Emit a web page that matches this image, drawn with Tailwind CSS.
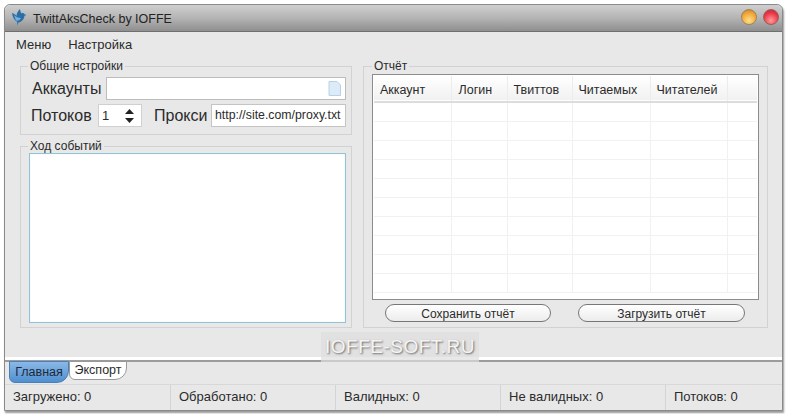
<!DOCTYPE html>
<html lang="en">
  <head>
    <meta charset="UTF-8" />
    <meta name="viewport" content="width=device-width, initial-scale=1.0" />
    <title>TwittAksCheck by IOFFE</title>
    <script src="https://cdn.jsdelivr.net/npm/@tailwindcss/browser@4"></script>
  </head>
  <body class="bg-white font-['Liberation_Sans',sans-serif] text-[#2b2b2b]">
    <div class="w-[788px] h-[414px] pl-1 pt-1 overflow-hidden">
      <!-- window -->
      <div class="relative w-[779px] h-[407px] flex flex-col bg-[#e8e8e8] border border-[#8a8a8a] rounded-t-md shadow-[1px_2px_2px_#999]">
        <div class="h-[27px] flex items-center pl-1.5 pr-[3px] bg-gradient-to-b from-[#cfcfcf] via-[#b4b4b4] to-[#8f8f8f] border-b border-[#6f6f6f] rounded-t-md">
          <svg class="w-[16px] h-[17px] mb-0.5" viewBox="0 0 16 17">
            <path d="M1 4c2 .5 3.500 1.500 4.500 3C5.500 4 7 2 9 0c0 1.500.5 3 1.500 4.500 1-.7 2.500-.5 3 .7l2 .8-2 .8c-.3 3.700-3 6.200-6 6.700L6 16.500l.3-3.500C3.500 11.500 1.500 8 1 4z" fill="#2c6ea8" />
            <path d="M3 6c2 2 4 3 7 3-1 2-3 3-5 2.500z" fill="#74b2de" />
          </svg>
          <span class="ml-[6px] text-[12.500px] text-[#222] mt-0.5">TwittAksCheck by IOFFE</span>
          <span class="ml-auto w-4 h-4 mb-0.5 rounded-full bg-[radial-gradient(circle_at_50%_75%,#ffe08a,#f0a030_65%,#a87a3a)] border border-[#a0855a]"></span>
          <span class="ml-1.5 w-4 h-4 mb-0.5 rounded-full bg-[radial-gradient(circle_at_50%_75%,#ff9a9a,#e83040_65%,#a04040)] border border-[#a05a5a]"></span>
        </div>

        <div class="flex gap-[17px] pl-[11px] pt-[5px] h-[22px] text-[13px] leading-4">
          <span>Меню</span>
          <span>Настройка</span>
        </div>

        <div class="flex gap-[11px] pl-[15px] mt-[6px] h-[268px]">
          <!-- left column -->
          <div class="w-[332px] flex flex-col gap-[5px]">
            <fieldset class="h-[75px] border border-[#d2d2d2] pl-[9px] pr-[5px]">
              <legend class="text-xs leading-[13px] px-0.5 -ml-0.5">Общие нстройки</legend>
              <div class="flex items-center gap-1 mt-1 pl-[2px]">
                <label class="text-[16px] leading-[18px] w-[70px]">Аккаунты</label>
                <div class="w-[240px] h-[23px] bg-white border border-[#bcbcbc] flex items-center justify-end pr-1">
                  <svg class="w-[13px] h-[15px]" viewBox="0 0 13 15"><path d="M1 .5h8l3.500 3.500v10.500H1z" fill="#dcebf7" stroke="#b7d2e8" /></svg>
                </div>
              </div>
              <div class="flex items-center mt-[4px]">
                <label class="text-[16px] leading-[18px] w-[68px] pl-px">Потоков</label>
                <div class="w-[44px] h-[23px] bg-white border border-[#d0d0d0] flex items-center pl-[3px] text-[13px]">
                  1
                  <svg class="ml-auto mr-[7px] w-[9px] h-[14px]" viewBox="0 0 9 14" fill="#222"><path d="M4.500 0 9 5H0zM0 9h9l-4.500 5z" /></svg>
                </div>
                <label class="text-[16px] leading-[18px] ml-[12px] w-[57px]">Прокси</label>
                <div class="w-[135px] h-[23px] bg-white border border-[#c4c4c4] pl-[3px] text-[12.300px] leading-[21px] whitespace-nowrap overflow-hidden">http://site.com/proxy.txt</div>
              </div>
            </fieldset>
            <fieldset class="flex-1 min-h-0 border border-[#d2d2d2] pl-[8px] pr-[5px] pb-[5px]">
              <legend class="text-xs leading-[13px] px-0.5 -ml-px">Ход событий</legend>
              <div class="h-[170px] bg-white border border-[#8fc4d6] shadow-[inset_0_0_1px_#bfe0ea]"></div>
            </fieldset>
          </div>

          <!-- right column -->
          <fieldset class="w-[405px] border border-[#d2d2d2] pl-[8px] pr-[8px]">
            <legend class="text-xs leading-[13px] px-0.5">Отчёт</legend>
            <div class="h-[226px] mt-px bg-white border border-[#8c8c8c] p-px overflow-hidden">
              <table class="w-[383px] table-fixed border-collapse text-[12.500px]">
                <colgroup>
                  <col class="w-[77px]" /><col class="w-[56px]" /><col class="w-[65px]" /><col class="w-[78px]" /><col class="w-[77px]" /><col />
                </colgroup>
                <thead>
                  <tr class="h-[26px] bg-gradient-to-b from-white to-[#f1f1f1] border-b-2 border-[#dcdcdc]">
                    <th class="font-normal text-left pl-[6px] pt-1 border-r border-[#ececec]">Аккаунт</th>
                    <th class="font-normal text-left pl-[7px] pt-1 border-r border-[#ececec]">Логин</th>
                    <th class="font-normal text-left pl-[6px] pt-1 border-r border-[#ececec]">Твиттов</th>
                    <th class="font-normal text-left pl-[6px] pt-1 border-r border-[#ececec]">Читаемых</th>
                    <th class="font-normal text-left pl-[6px] pt-1 border-r border-[#ececec]">Читателей</th>
                    <th></th>
                  </tr>
                </thead>
                <tbody id="rows"></tbody>
              </table>
            </div>
            <div class="flex gap-[27px] pl-[13px] mt-[4px]">
              <button class="w-[166px] h-[18px] pt-px rounded-full bg-gradient-to-b from-white to-[#ececec] border border-[#777] text-xs leading-none">Сохранить отчёт</button>
              <button class="w-[167px] h-[18px] pt-px rounded-full bg-gradient-to-b from-white to-[#ececec] border border-[#777] text-xs leading-none">Загрузить отчёт</button>
            </div>
          </fieldset>
        </div>

        <!-- tab strip -->
        <div class="mt-auto">
          <div class="h-[3px] bg-white border-b-2 border-[#9c9c9c] box-content"></div>
          <div class="flex h-[22px] pl-1 text-xs">
            <div class="w-[60px] h-[22px] -mt-px flex items-center justify-center rounded-bl-md rounded-br-xl bg-gradient-to-b from-[#8ab8e8] to-[#4f8fd0] border border-[#4a80b8] text-[#1c2a38] text-[12.500px]">Главная</div>
            <div class="w-[58px] h-[19px] -mt-px flex items-center justify-center rounded-br-xl rounded-bl-md bg-white border border-[#999] text-[12.500px]">Экспорт</div>
          </div>
          <div class="flex h-[26px] border-t border-[#d8d8d8] text-[13px] leading-[24px]">
            <div class="w-[166px] pl-2 border-r border-[#d4d4d4]">Загружено: 0</div>
            <div class="w-[165px] pl-2 border-r border-[#d4d4d4]">Обработано: 0</div>
            <div class="w-[165px] pl-2 border-r border-[#d4d4d4]">Валидных: 0</div>
            <div class="w-[165px] pl-2 border-r border-[#d4d4d4]">Не валидных: 0</div>
            <div class="flex-1 pl-2">Потоков: 0</div>
          </div>
        </div>

        <!-- watermark over the window -->
        <div class="absolute left-[316px] top-[327px] w-[158px] h-[30px] bg-[#dedede]/70 flex items-center justify-center text-[19px] tracking-[.5px] text-[#f4f4f4] [text-shadow:1px_1px_2px_#666]">IOFFE-SOFT.RU</div>
      </div>
    </div>
    <script>
      // empty report rows
      const cells = '<td class="border-r border-[#f1f1f1]"></td>'.repeat(5) + '<td></td>';
      document.getElementById('rows').innerHTML = Array(10)
        .fill('<tr class="h-[19px] border-b border-[#f1f1f1]">' + cells + '</tr>')
        .join('');
    </script>
  </body>
</html>
